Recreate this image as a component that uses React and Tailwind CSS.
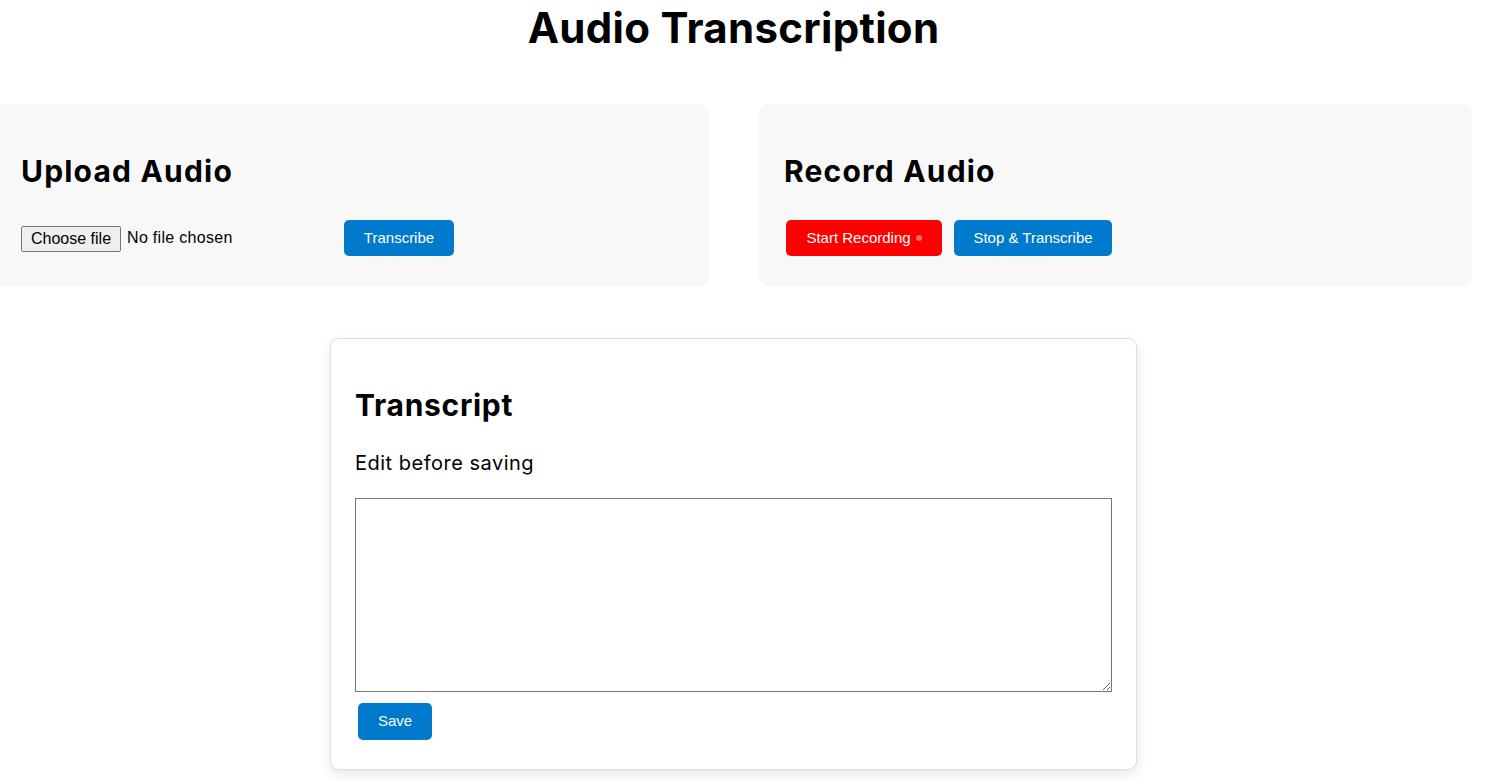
import React, { useState } from "react";

const HEADING = "font-['Inter',sans-serif]";
const BTN =
  "h-[36px] px-[12px] rounded-[5px] text-white text-[15px] whitespace-nowrap font-['Liberation_Sans',Arial,sans-serif] flex items-center";

// Fake file picker so the label reads the same in every browser
function FilePicker() {
  return (
    <label className="w-[323px] shrink-0 flex items-center font-['Liberation_Sans',Arial,sans-serif] text-[16px] text-black cursor-pointer">
      <input type="file" accept="audio/*" className="hidden" />
      <span className="mt-[2px] h-[26px] px-[9px] flex items-center bg-[#efefef] border border-[#767676] rounded-[2px]">
        Choose file
      </span>
      <span className="ml-[6px] tracking-[0.3px]">No file chosen</span>
    </label>
  );
}

function Panel({ title, children }) {
  return (
    <div className="w-[713px] shrink-0 bg-[#f8f8f8] rounded-[9px] pt-[49px] px-[25px] pb-[30px]">
      <h2 className={`${HEADING} text-[30px] leading-[36px] font-bold text-black tracking-[1.2px]`}>
        {title}
      </h2>
      <div className="mt-[31px] flex items-center">{children}</div>
    </div>
  );
}

export default function App() {
  const [text, setText] = useState("");

  return (
    <div className="w-[1467px] min-h-screen bg-white pt-[3px]">
      <h1 className={`${HEADING} text-center text-[42px] leading-[50px] font-bold text-black tracking-[0.3px]`}>
        Audio Transcription
      </h1>

      {/* Upload + record */}
      <div className="mt-[51px] -ml-[4px] flex gap-[50px]">
        <Panel title="Upload Audio">
          <FilePicker />
          <button className={`${BTN} bg-[#007acc] w-[110px] justify-center`}>Transcribe</button>
        </Panel>
        <Panel title="Record Audio">
          <button className={`${BTN} ml-[2px] bg-[#ff0000] w-[156px] justify-center`}>
            Start Recording
            <span className="ml-[5px] w-[6px] h-[6px] shrink-0 rounded-full bg-[#ff6b6b]" />
          </button>
          <button className={`${BTN} ml-[12px] bg-[#007acc] w-[158px] justify-center`}>
            Stop &amp; Transcribe
          </button>
        </Panel>
      </div>

      {/* Transcript editor */}
      <div className="mt-[52px] mx-auto w-[807px] bg-white border border-[#dddddd] rounded-[9px] shadow-[0_4px_12px_rgba(0,0,0,0.1)] pt-[48px] px-[24px] pb-[29px]">
        <h2 className={`${HEADING} text-[30px] leading-[36px] font-bold text-black tracking-[0.7px]`}>
          Transcript
        </h2>
        <p className={`${HEADING} mt-[28px] text-[20px] leading-[24px] text-black tracking-[0.5px]`}>
          Edit before saving
        </p>
        <textarea
          value={text}
          onChange={(e) => setText(e.target.value)}
          className="mt-[23px] block w-[757px] h-[194px] border border-[#767676] bg-white"
        />
        <button className={`${BTN} mt-[11px] ml-[3px] h-[37px] w-[74px] justify-center bg-[#007acc]`}>
          Save
        </button>
      </div>
    </div>
  );
}
